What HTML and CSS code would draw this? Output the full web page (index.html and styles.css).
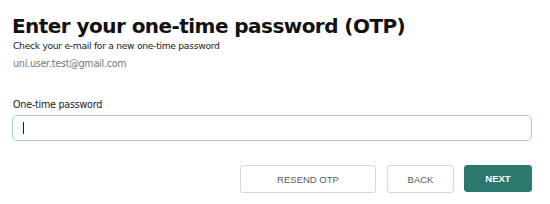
FILE: index.html
```html
<!DOCTYPE html>
<html lang="en">
  <head>
    <meta charset="UTF-8">
    <title>Enter your one-time password</title>
    <link rel="stylesheet" href="styles.css">
  </head>
  <body>
    <div class="otp-form">
      <h1 class="title">Enter your one-time password (OTP)</h1>
      <p class="subtitle">Check your e-mail for a new one-time password</p>
      <p class="email">uni.user.test@gmail.com</p>
      <label class="field-label" for="otp">One-time password</label>
      <div class="field">
        <input id="otp" class="field-input" type="text" autofocus>
        <span class="caret"></span>
      </div>
      <div class="actions">
        <button class="btn btn-outline btn-resend">RESEND OTP</button>
        <button class="btn btn-outline btn-back">BACK</button>
        <button class="btn btn-primary">NEXT</button>
      </div>
    </div>
  </body>
</html>
```

FILE: styles.css
```css
:root {
  font-family: "DejaVu Sans", Verdana, sans-serif;
}

body {
  margin: 0;
  background: #fff;
  color: #111;
}

.otp-form {
  padding: 14px 18px 0 12px;
  display: flex;
  flex-direction: column;
}

.title {
  margin: 0;
  font-size: 20px;
  line-height: 24px;
  letter-spacing: -0.55px;
  font-weight: bold;
}

.subtitle {
  margin: 2px 0 0 1px;
  font-size: 9.2px;
  line-height: 12px;
  letter-spacing: -0.3px;
  color: #222;
}

.email {
  margin: 6px 0 0 1px;
  font-size: 9.6px;
  line-height: 12px;
  letter-spacing: -0.25px;
  color: #777;
}

.field-label {
  margin: 29px 0 0 1px;
  font-size: 9.6px;
  line-height: 12px;
  letter-spacing: -0.25px;
  color: #222;
}

.field {
  position: relative;
  margin-top: 4px;
  display: flex;
}

.field-input {
  flex: 1;
  height: 26px;
  box-sizing: border-box;
  border: 1px solid #a9c8e4;
  border-radius: 5px;
  padding: 0 10px;
  font-size: 12px;
  outline: none;
  caret-color: transparent;
}

.caret {
  position: absolute;
  left: 11px;
  top: 7px;
  width: 1px;
  height: 12px;
  background: #222;
  pointer-events: none;
}

.actions {
  display: flex;
  justify-content: flex-end;
  align-items: flex-start;
  gap: 10px;
  margin-top: 24px;
}

.btn {
  height: 28px;
  box-sizing: border-box;
  border-radius: 3px;
  font-family: "Liberation Sans", Arial, sans-serif;
  font-size: 9.5px;
  cursor: pointer;
}

.btn-outline {
  background: #fff;
  border: 1px solid #d6d6d6;
  color: #5a5a5a;
}

.btn-resend {
  width: 136px;
  margin-right: 1px;
}

.btn-back {
  width: 67px;
}

.btn-primary {
  width: 68px;
  height: 27px;
  background: #2c786e;
  border: 1px solid #2c786e;
  color: #fff;
  font-weight: bold;
}
```
